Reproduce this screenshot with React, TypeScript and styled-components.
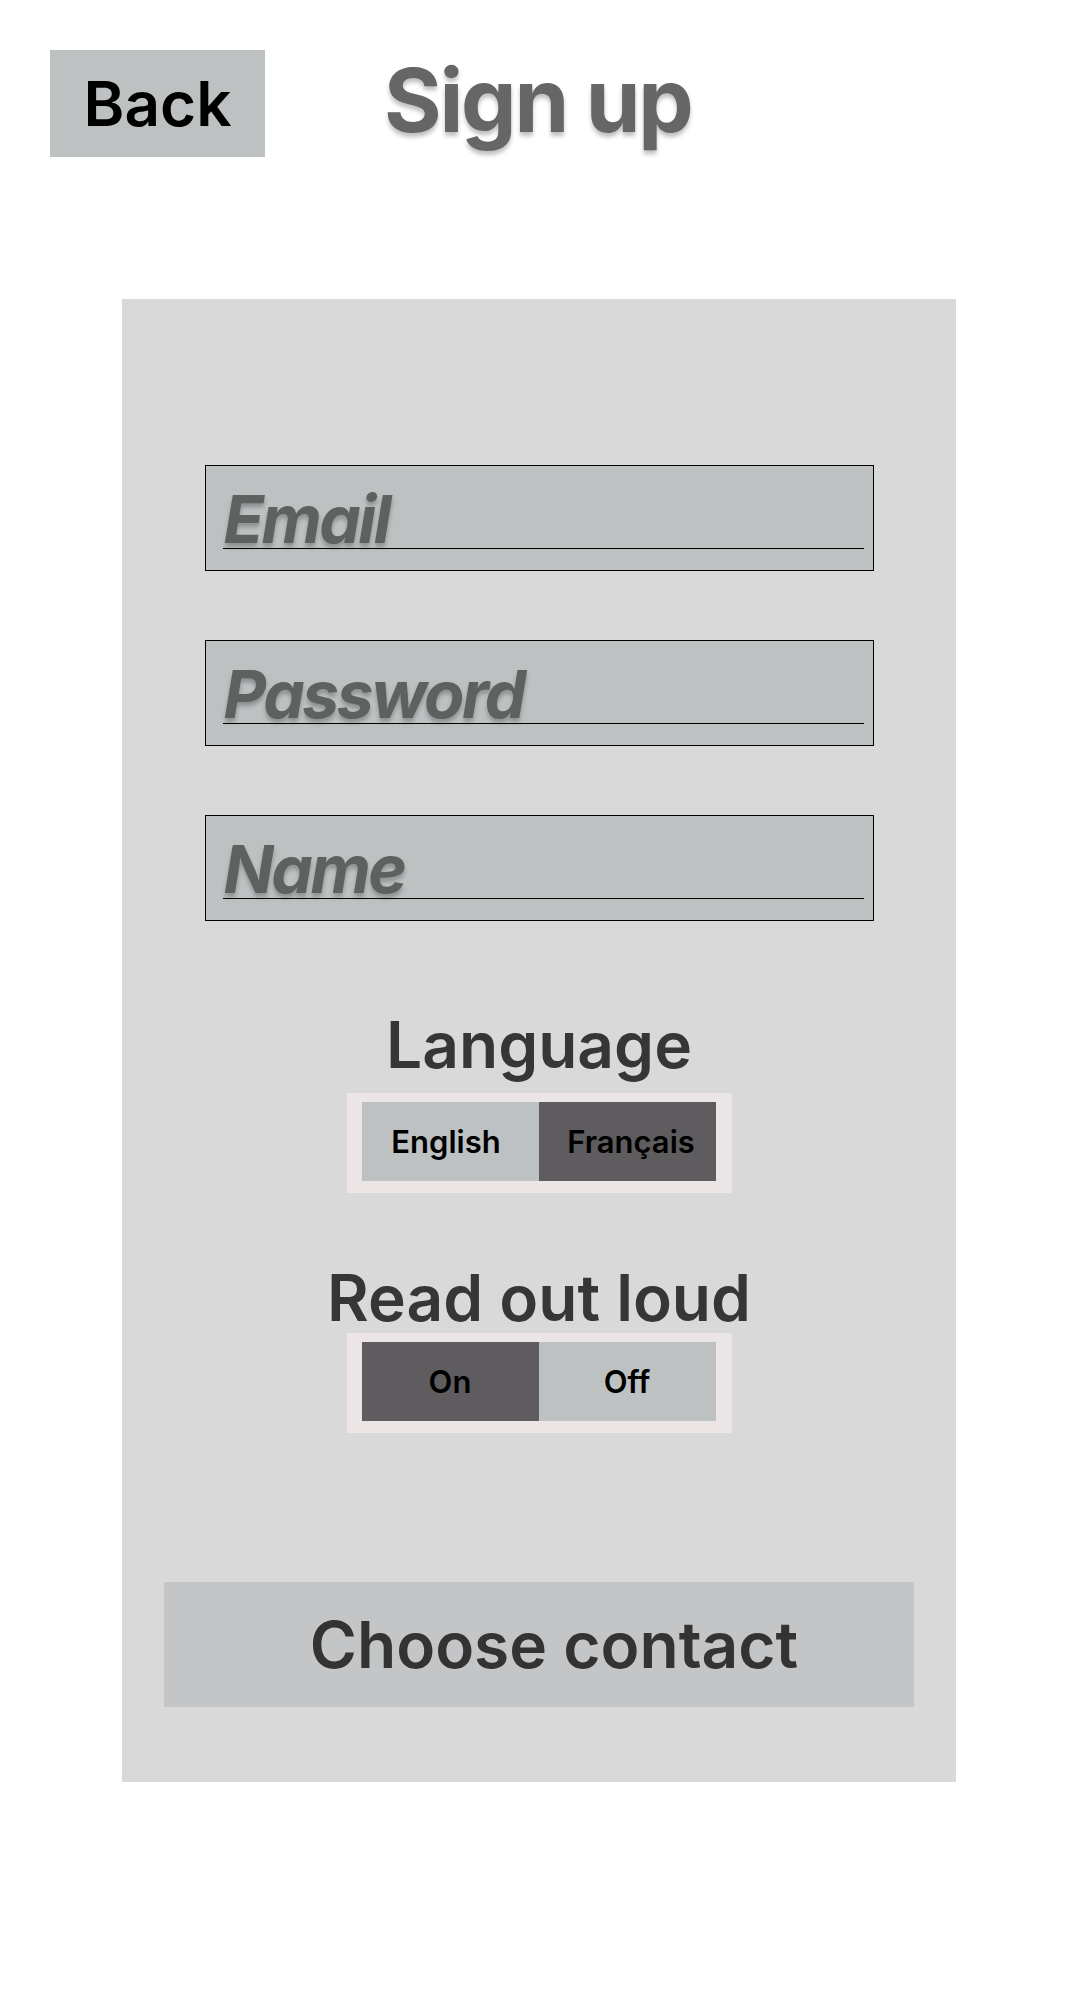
import React, { useState } from 'react';
import styled, { createGlobalStyle } from 'styled-components';

const GlobalStyle = createGlobalStyle`
  body {
    margin: 0;
    background: #ffffff;
    font-family: Inter, "Noto Sans", "Liberation Sans", sans-serif;
  }
`;

const Page = styled.div`
  padding: 50px;
  width: 1080px;
  box-sizing: border-box;
`;

const Header = styled.div`
  display: flex;
  align-items: flex-start;
  gap: 119px;
`;

const BackButton = styled.button`
  width: 215px;
  height: 107px;
  border: none;
  padding: 0;
  background: #bec1c2;
  color: #000000;
  font-family: Inter, sans-serif;
  font-size: 62px;
  font-weight: 600;
  line-height: 107px;
  cursor: pointer;
`;

const Title = styled.h1`
  margin: 6px 0 0;
  font-size: 88px;
  line-height: 88px;
  font-weight: 700;
  letter-spacing: -0.025em;
  color: #666666;
  text-shadow: 0 4px 4px rgba(0, 0, 0, 0.25);
`;

const Panel = styled.div`
  margin: 142px 0 0 72px;
  width: 834px;
  height: 1483px;
  box-sizing: border-box;
  background: #d9d9d9;
  padding-top: 166px;
  display: flex;
  flex-direction: column;
  align-items: center;
`;

const InputBox = styled.div`
  width: 669px;
  box-sizing: border-box;
  border: 1px solid #000000;
  background: #bec1c2;
  padding: 24px 9px 21px 17px;
  margin-bottom: 69px;
`;

const Field = styled.div`
  border-bottom: 1px solid #000000;
  font-size: 66px;
  line-height: 58px;
  font-weight: 700;
  font-style: italic;
  letter-spacing: -2.5px;
  color: #5f6161;
  text-shadow: 0 4px 4px rgba(0, 0, 0, 0.25);
  padding-left: 1px;
`;

const Label = styled.div<{ $gap: number; $top: number }>`
  margin-top: ${(p) => p.$top}px;
  margin-bottom: ${(p) => p.$gap}px;
  font-size: 64px;
  line-height: 64px;
  font-weight: 600;
  color: #363636;
  text-align: center;
`;

const Segmented = styled.div`
  display: flex;
  width: 385px;
  box-sizing: border-box;
  padding: 9px 16px 12px 15px;
  background: #ebe5e5;
`;

const Segment = styled.button<{ $active: boolean; $shift?: number }>`
  flex: 1;
  height: 79px;
  border: none;
  padding: 0;
  padding-left: ${(p) => Math.max(0, p.$shift ?? 0)}px;
  padding-right: ${(p) => Math.max(0, -(p.$shift ?? 0))}px;
  background: ${(p) => (p.$active ? '#5e5c5e' : '#bec1c2')};
  color: #000000;
  font-family: Inter, sans-serif;
  font-size: 31px;
  font-weight: 600;
  cursor: pointer;
`;

const ContactButton = styled.button`
  margin-top: 149px;
  width: 750px;
  height: 125px;
  border: none;
  padding: 0 0 0 30px;
  background: #c4c5c7;
  color: #333333;
  font-family: Inter, sans-serif;
  font-size: 64px;
  font-weight: 600;
  cursor: pointer;
`;

const fields = ['Email', 'Password', 'Name'];

export default function App() {
  const [lang, setLang] = useState('fr');
  const [speak, setSpeak] = useState(true);

  return (
    <Page>
      <GlobalStyle />
      <Header>
        <BackButton>Back</BackButton>
        <Title>Sign up</Title>
      </Header>
      <Panel>
        {fields.map((f) => (
          <InputBox key={f}>
            <Field>{f}</Field>
          </InputBox>
        ))}
        <Label $top={23} $gap={16}>Language</Label>
        <Segmented>
          <Segment $active={lang === 'en'} $shift={-8} onClick={() => setLang('en')}>English</Segment>
          <Segment $active={lang === 'fr'} $shift={8} onClick={() => setLang('fr')}>Français</Segment>
        </Segmented>
        <Label $top={73} $gap={3}>Read out loud</Label>
        <Segmented>
          <Segment $active={speak} onClick={() => setSpeak(true)}>On</Segment>
          <Segment $active={!speak} onClick={() => setSpeak(false)}>Off</Segment>
        </Segmented>
        <ContactButton>Choose contact</ContactButton>
      </Panel>
    </Page>
  );
}
